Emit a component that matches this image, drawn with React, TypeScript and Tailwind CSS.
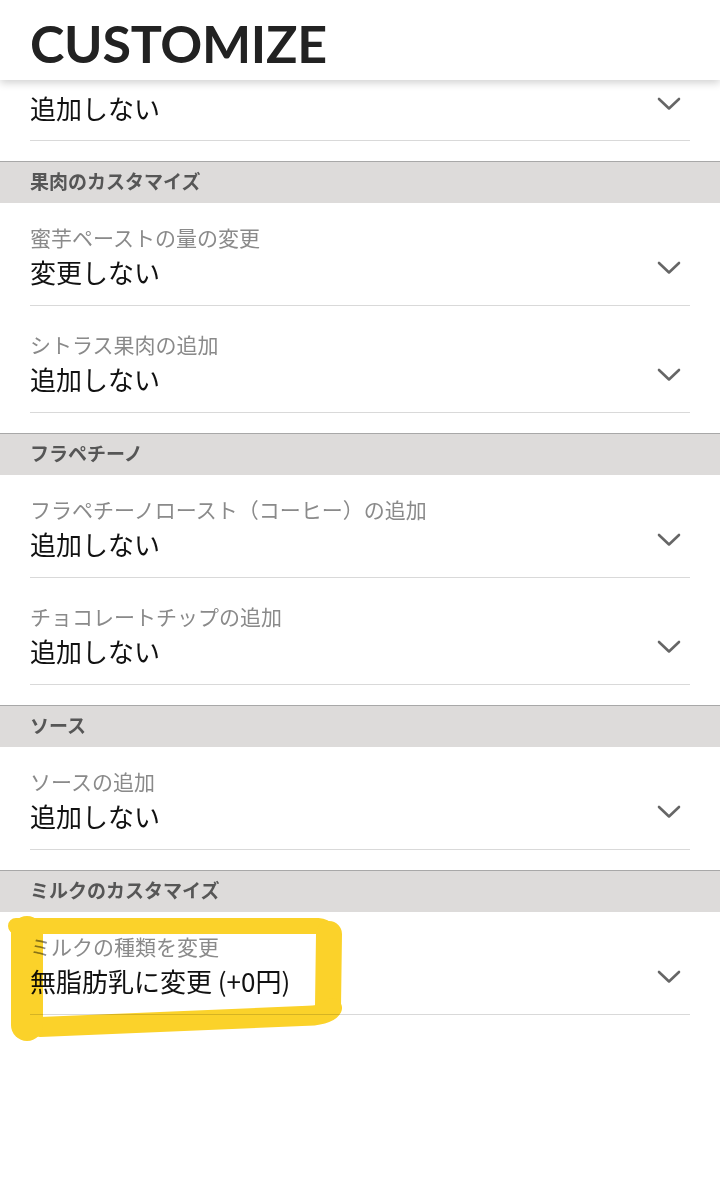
const JP = "font-['Noto_Sans_CJK_JP','Noto_Sans',sans-serif]";

type Row = { label: string; value: string };
type Section = { title: string; rows: Row[] };

const SECTIONS: Section[] = [
  {
    title: "果肉のカスタマイズ",
    rows: [
      { label: "蜜芋ペーストの量の変更", value: "変更しない" },
      { label: "シトラス果肉の追加", value: "追加しない" },
    ],
  },
  {
    title: "フラペチーノ",
    rows: [
      { label: "フラペチーノロースト（コーヒー）の追加", value: "追加しない" },
      { label: "チョコレートチップの追加", value: "追加しない" },
    ],
  },
  {
    title: "ソース",
    rows: [{ label: "ソースの追加", value: "追加しない" }],
  },
  {
    title: "ミルクのカスタマイズ",
    rows: [{ label: "ミルクの種類を変更", value: "無脂肪乳に変更 (+0円)" }],
  },
];

function Chevron() {
  return (
    <svg width="24" height="14" viewBox="0 0 24 14" className="mr-[9px] -translate-y-[4px] shrink-0">
      <polyline points="2,2 12,11.5 22,2" fill="none" stroke="#666" strokeWidth="2.6" strokeLinecap="round" strokeLinejoin="round" />
    </svg>
  );
}

function Value({ text }: { text: string }) {
  return (
    <div className="flex items-center justify-between">
      <span className="text-[26px] leading-[34px] text-[#111]">{text}</span>
      <Chevron />
    </div>
  );
}

function SelectRow({ row }: { row: Row }) {
  return (
    <div className="border-b border-[#d9d9d9] pb-[16px]">
      <div className="text-[21px] leading-[24px] text-[#8a8a8a] -translate-y-[1px]">{row.label}</div>
      <div className="mt-[5px]">
        <Value text={row.value} />
      </div>
    </div>
  );
}

export default function App() {
  return (
    <div className={`relative min-h-[1193px] w-full bg-white ${JP}`}>
      {/* header */}
      <div className="relative z-10 flex h-[80px] items-center bg-white px-[30px] pt-[6px] shadow-[0_3px_8px_rgba(0,0,0,0.18)]">
        <h1 className="font-['Lato',sans-serif] text-[52px] font-bold leading-none tracking-[-0.3px] text-[#222]">
          CUSTOMIZE
        </h1>
      </div>

      {/* partially scrolled row */}
      <div className="px-[30px] pt-[11px] pb-[20px]">
        <div className="border-b border-[#d9d9d9] pb-[15px]">
          <Value text="追加しない" />
        </div>
      </div>

      {SECTIONS.map((s) => (
        <section key={s.title}>
          <div className="flex h-[42px] items-center border-t border-[#a8a8a8] bg-[#dddbda] px-[30px] pb-[3px]">
            <span className="text-[19px] font-bold text-[#565656]">{s.title}</span>
          </div>
          <div className="flex flex-col gap-[27px] px-[30px] pt-[23px] pb-[20px]">
            {s.rows.map((r) => (
              <SelectRow key={r.label} row={r} />
            ))}
          </div>
        </section>
      ))}

      {/* hand-drawn highlight */}
      <svg
        className="pointer-events-none absolute left-0 top-0 z-20 mix-blend-multiply"
        width="720"
        height="1193"
        viewBox="0 0 720 1193"
      >
        <g fill="none" stroke="#fbd22a" strokeLinecap="round" strokeLinejoin="round">
          <path d="M16 926 L318 926 Q331 927 330 942 L329 1004" strokeWidth="16" />
          <path d="M329 934 L328 1006" strokeWidth="26" />
          <path d="M332 1008 Q328 1016 302 1016 L40 1027" strokeWidth="20" />
          <path d="M27 932 L27 1025" strokeWidth="32" />
        </g>
      </svg>
    </div>
  );
}
